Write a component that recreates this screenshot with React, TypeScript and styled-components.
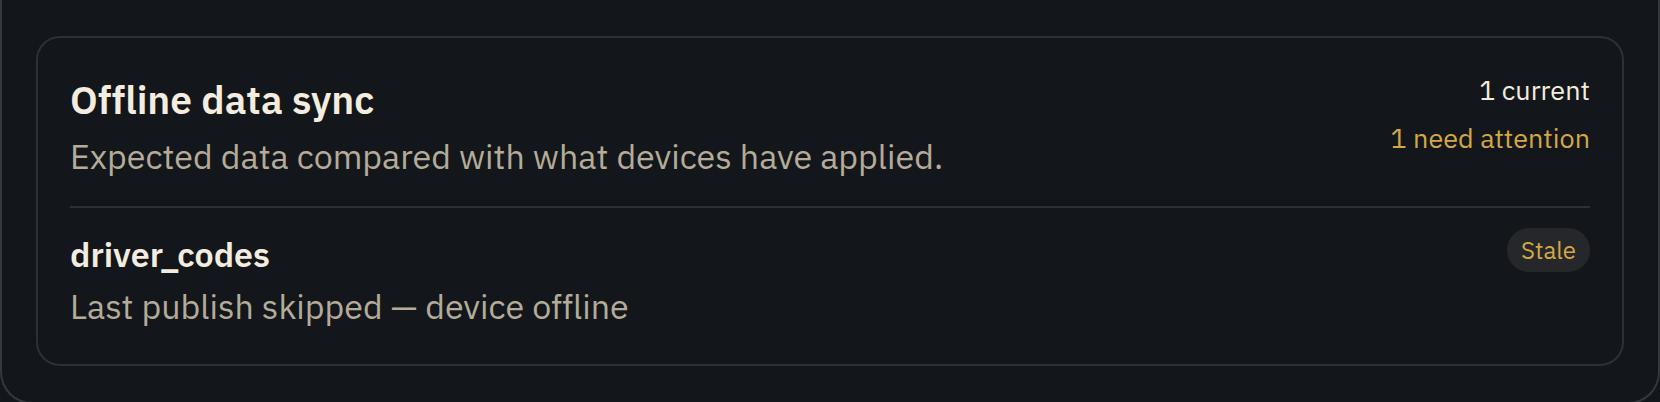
import React from "react";
import styled, { createGlobalStyle } from "styled-components";

const color = {
  background: "#13171b",
  outline: "#33393c",
  line: "#2d3133",
  text: "#f3ecdf",
  muted: "#b5ab99",
  warning: "#d4a746",
  badge: "#26272a",
};

type Tone = "text" | "muted" | "warning";

const GlobalStyle = createGlobalStyle`
  *, *::before, *::after { box-sizing: border-box; }
  body {
    margin: 0;
    overflow: hidden;
    background: ${color.background};
    color: ${color.text};
    font-family: "IBM Plex Sans", Roboto, sans-serif;
  }
  h2, h3, p, ul { margin: 0; padding: 0; }
`;

const Panel = styled.main`
  padding: 36px 34px;
  border: 2px solid ${color.outline};
  border-top: 0;
  border-radius: 0 0 32px 32px;
  background: ${color.background};
`;

const Card = styled.section`
  padding: 32px;
  border: 2px solid ${color.line};
  border-radius: 24px;
`;

const Row = styled.div`
  display: flex;
  align-items: flex-start;
  justify-content: space-between;
  gap: 32px;
`;

const Header = styled(Row).attrs({ as: "header" })`
  padding-bottom: 24px;
`;

const Title = styled.h2`
  font-size: 39px;
  font-weight: 600;
  line-height: 60px;
`;

const Description = styled.p`
  color: ${color.muted};
  font-size: 34px;
  line-height: 52px;
`;

const Summary = styled.div`
  display: flex;
  flex-direction: column;
  gap: 8px;
  text-align: right;
`;

const Count = styled.p<{ $tone: Tone }>`
  color: ${({ $tone }) => color[$tone]};
  font-size: 27px;
  line-height: 40px;
  white-space: nowrap;
`;

const Datasets = styled.ul`
  list-style: none;
`;

const Dataset = styled(Row).attrs({ as: "li" })`
  padding-top: 20px;
  border-top: 2px solid ${color.line};
`;

const Name = styled.h3`
  font-size: 34px;
  font-weight: 600;
  line-height: 52px;
`;

const Badge = styled.span`
  padding: 4px 14px;
  border-radius: 22px;
  background: ${color.badge};
  color: ${color.warning};
  font-size: 24px;
  line-height: 36px;
`;

const datasets = [
  {
    name: "driver_codes",
    detail: "Last publish skipped — device offline",
    status: "Stale",
  },
];

export default function App() {
  return (
    <>
      <GlobalStyle />
      <Panel>
        <Card aria-labelledby="sync-title">
          <Header>
            <div>
              <Title id="sync-title">Offline data sync</Title>
              <Description>
                Expected data compared with what devices have applied.
              </Description>
            </div>
            <Summary>
              <Count $tone="text">1 current</Count>
              <Count $tone="warning">1 need attention</Count>
            </Summary>
          </Header>
          <Datasets>
            {datasets.map(({ name, detail, status }) => (
              <Dataset key={name}>
                <div>
                  <Name>{name}</Name>
                  <Description>{detail}</Description>
                </div>
                <Badge>{status}</Badge>
              </Dataset>
            ))}
          </Datasets>
        </Card>
      </Panel>
    </>
  );
}
